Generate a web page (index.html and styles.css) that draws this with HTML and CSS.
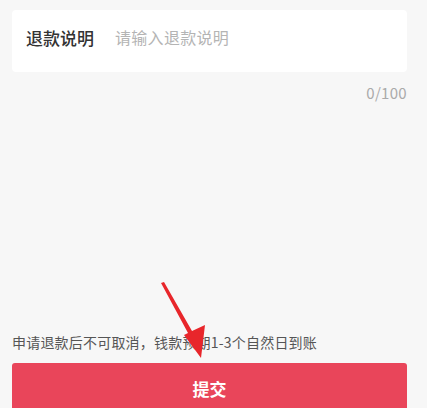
FILE: index.html
```html
<!DOCTYPE html>
<html lang="zh-CN">
<head>
<meta charset="utf-8">
<link rel="stylesheet" href="styles.css">
</head>
<body>
<div class="page">
  <div class="card">
    <span class="label">退款说明</span>
    <span class="placeholder">请输入退款说明</span>
  </div>
  <div class="counter">0/100</div>
  <div class="bottom">
    <p class="tip">申请退款后不可取消，钱款预期1-3个自然日到账</p>
    <button class="submit">提交</button>
  </div>
  <svg class="arrow" width="427" height="408" viewBox="0 0 427 408">
    <polygon fill="#e8262b" points="161,283 164,282 192,331 205,325 201,358 184,335 188,333"/>
  </svg>
</div>
</body>
</html>
```
FILE: styles.css
```css
* { box-sizing: border-box; }
html, body { margin: 0; padding: 0; }
body {
  background: #f7f7f7;
  font-family: "Noto Sans CJK SC", "Noto Sans", sans-serif;
  width: 427px;
  height: 408px;
  overflow: hidden;
}
.page {
  position: relative;
  height: 408px;
  padding: 10px 20px 0 12px;
  display: flex;
  flex-direction: column;
}
.card {
  background: #fff;
  height: 62px;
  border-radius: 4px;
  display: flex;
  align-items: center;
  padding: 0 14px 8px;
  gap: 21px;
}
.label {
  font-size: 17px;
  font-weight: 500;
  color: #333;
}
.placeholder {
  font-size: 16px;
  color: #b4b4b4;
  letter-spacing: 0.3px;
}
.counter {
  margin-top: 11px;
  text-align: right;
  font-size: 15px;
  line-height: 20px;
  color: #aaa;
  padding-right: 0;
  letter-spacing: 0.3px;
}
.bottom {
  margin-top: auto;
  margin-bottom: -5px;
}
.tip {
  margin: 0 0 11px;
  font-size: 14px;
  line-height: 20px;
  color: #555;
  letter-spacing: 0.2px;
}
.submit {
  display: block;
  width: 100%;
  height: 50px;
  border: none;
  border-radius: 3px;
  background: #e9455a;
  color: #fff;
  font-family: inherit;
  font-size: 17px;
  font-weight: 700;
  padding: 0;
}
.arrow {
  position: absolute;
  left: 0;
  top: 0;
  pointer-events: none;
}
```
